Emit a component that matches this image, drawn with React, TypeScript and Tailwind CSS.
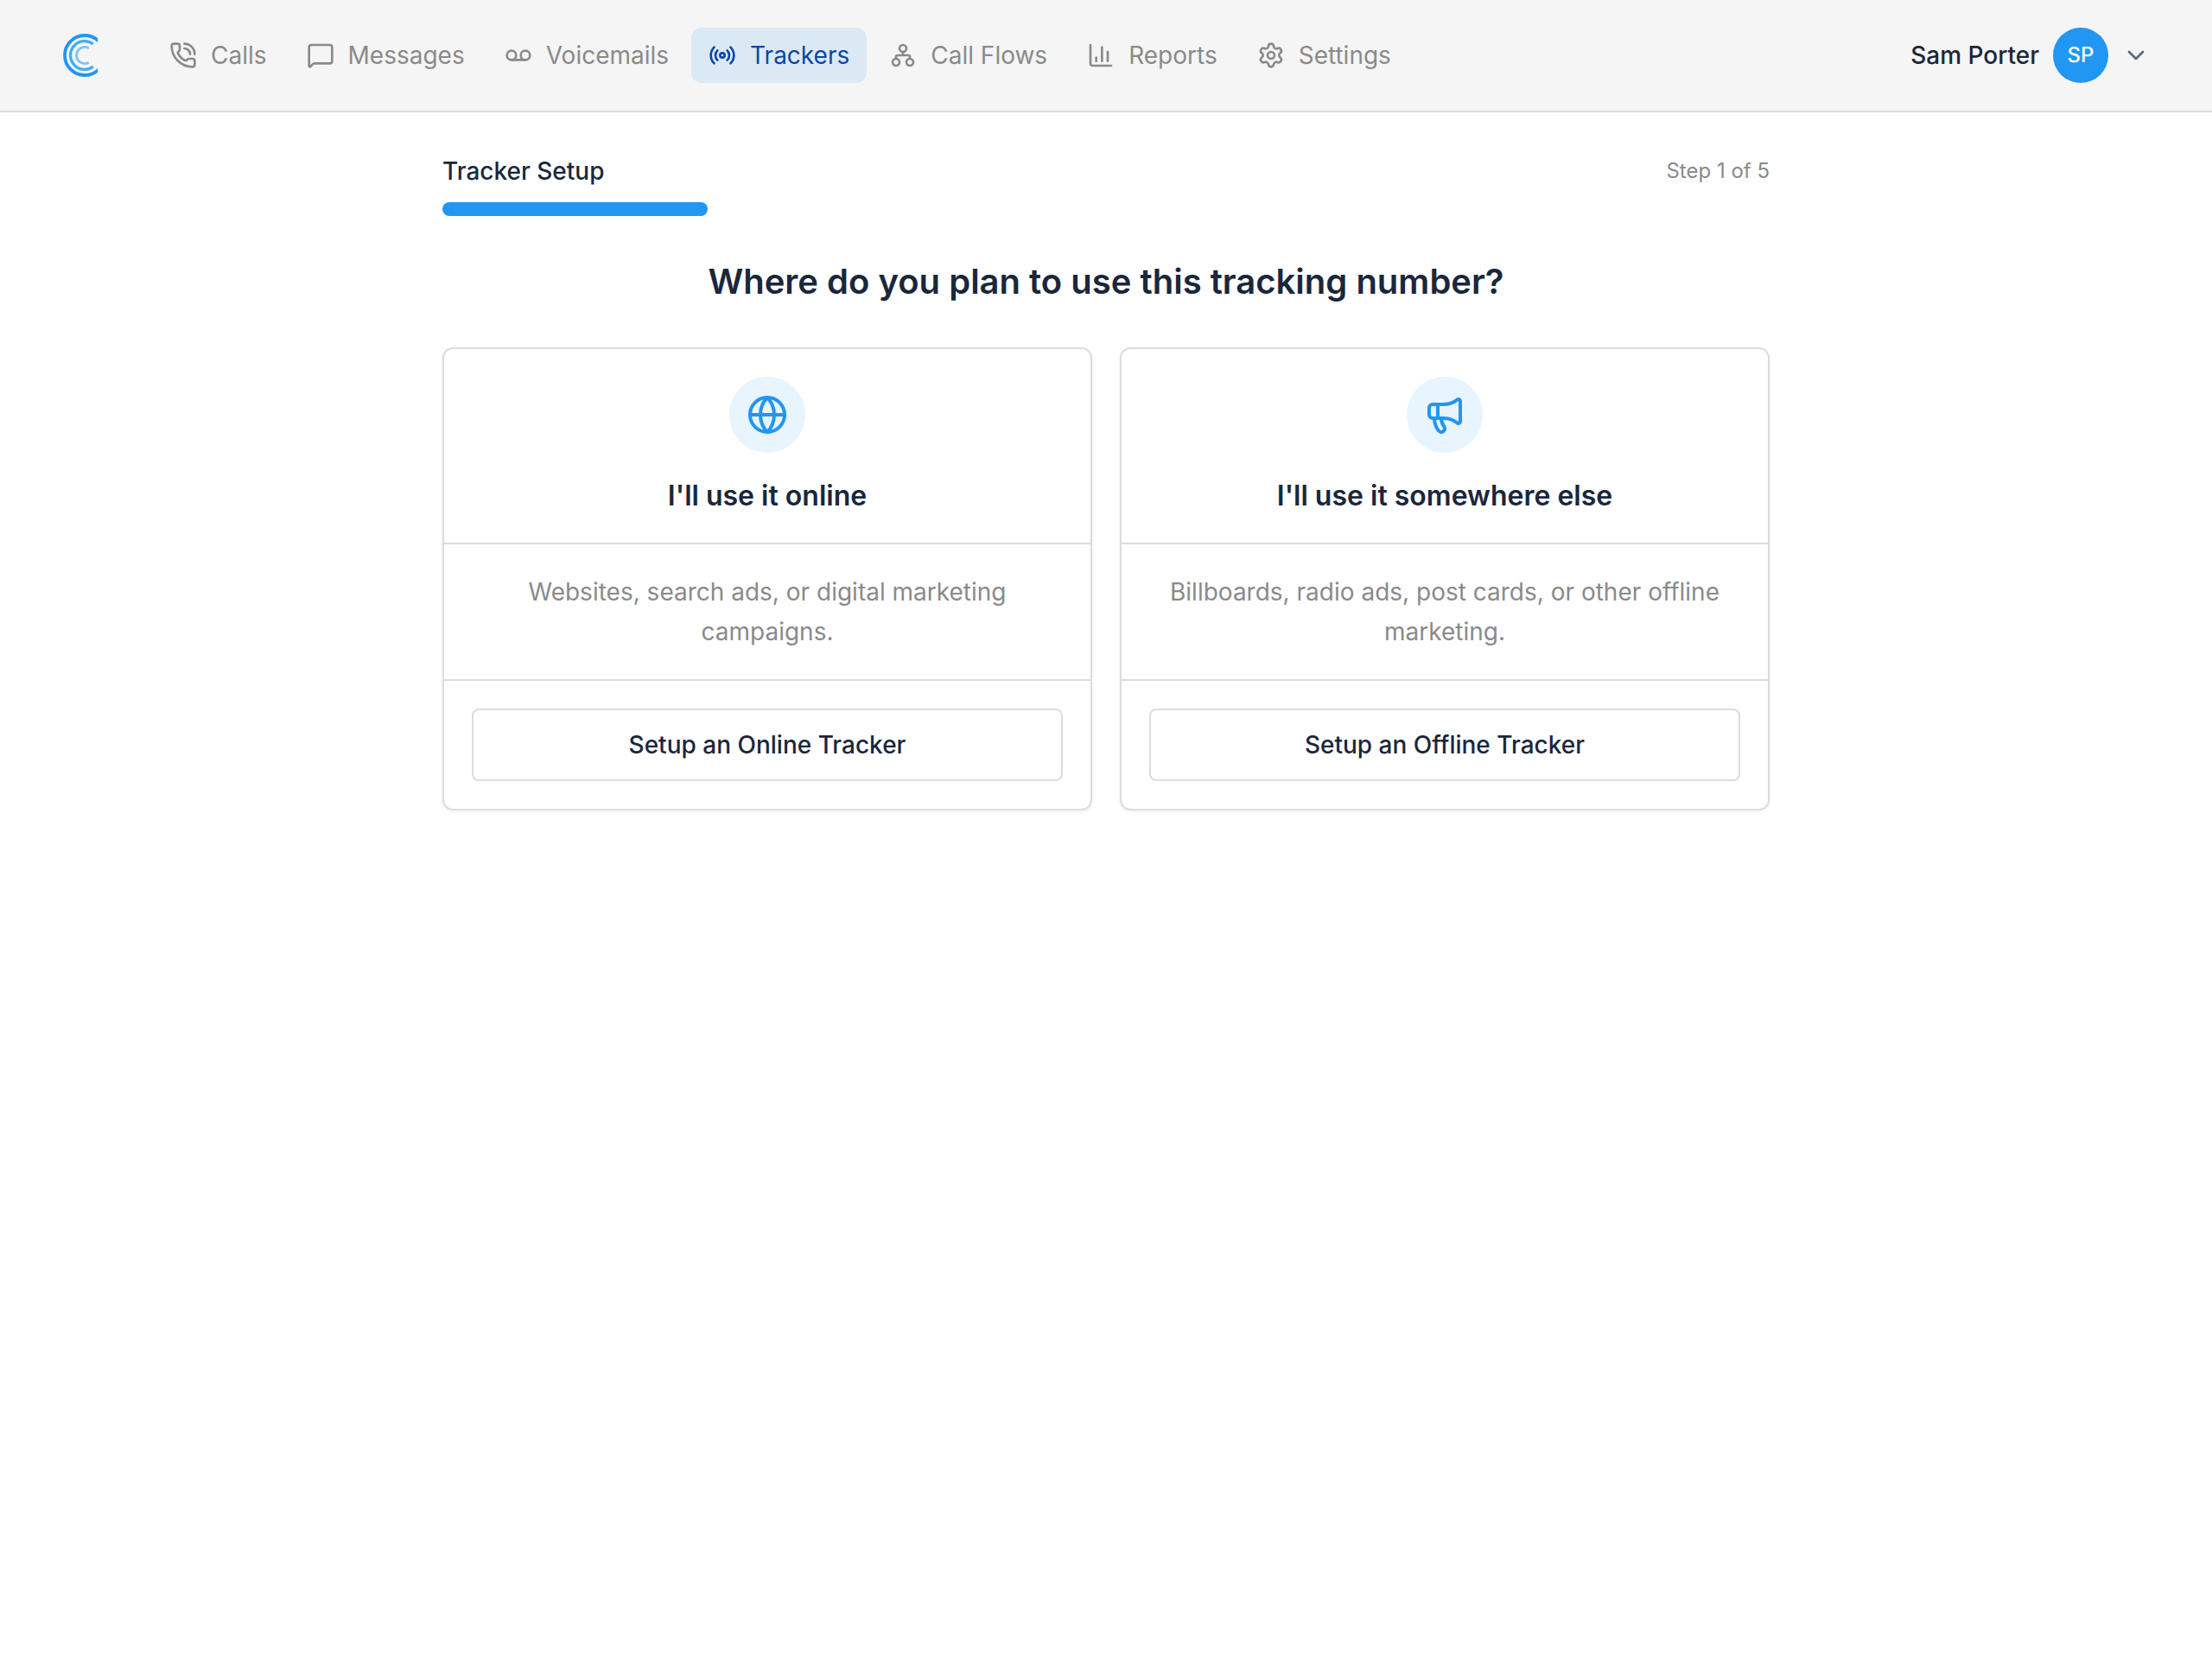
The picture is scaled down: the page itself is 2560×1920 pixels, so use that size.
import React from "react";
import { ChartColumn, ChevronDown, Globe, Megaphone, MessageSquare, PhoneCall, Radio, Settings, Voicemail } from "lucide-react";

type IconType = React.ComponentType<{ className?: string }>;

function FlowIcon({ className }: { className?: string }) {
  return (
    <svg className={className} viewBox="0 0 24 24" fill="none" stroke="currentColor" strokeWidth="2" strokeLinecap="round" strokeLinejoin="round" aria-hidden="true">
      <circle cx="12" cy="6" r="3" />
      <circle cx="6" cy="18" r="3" />
      <circle cx="18" cy="18" r="3" />
      <path d="M12 9v3M6 15v-2a1 1 0 0 1 1-1h10a1 1 0 0 1 1 1v2" />
    </svg>
  );
}

function Logo() {
  return (
    <svg className="h-[50px] w-[41px]" viewBox="0 0 41 50" fill="none" aria-hidden="true">
      <path d="M42 8.5A23 23 0 1 0 42 41.5" stroke="#2196f3" strokeWidth="3.8" />
      <path d="M35.8 11.9A16.4 16.4 0 1 0 35.8 38.1" stroke="#42aef2" strokeWidth="3.3" />
      <path d="M30.8 16.7A9.6 9.6 0 1 0 30.8 33.3" stroke="#7cc4f2" strokeWidth="2.8" />
    </svg>
  );
}

const navItems: { label: string; icon: IconType; active?: boolean }[] = [
  { label: "Calls", icon: PhoneCall },
  { label: "Messages", icon: MessageSquare },
  { label: "Voicemails", icon: Voicemail },
  { label: "Trackers", icon: Radio, active: true },
  { label: "Call Flows", icon: FlowIcon },
  { label: "Reports", icon: ChartColumn },
  { label: "Settings", icon: Settings },
];

const options: { title: string; text: string; action: string; icon: IconType }[] = [
  { title: "I'll use it online", text: "Websites, search ads, or digital marketing campaigns.", action: "Setup an Online Tracker", icon: Globe },
  { title: "I'll use it somewhere else", text: "Billboards, radio ads, post cards, or other offline marketing.", action: "Setup an Offline Tracker", icon: Megaphone },
];

export default function App() {
  return (
    <div className="min-h-screen bg-white font-['Inter',sans-serif] text-[28px] leading-10 text-[#1a273b]">
      <header className="flex items-center justify-between border-b-2 border-[#dcdcdc] bg-[#f5f5f5] px-[72px] py-8">
        <div className="flex items-center gap-[63px]">
          <a href="#" aria-label="Home">
            <Logo />
          </a>
          <nav className="flex gap-1.5">
            {navItems.map(({ label, icon: Icon, active }) => (
              <a
                key={label}
                href="#"
                aria-current={active ? "page" : undefined}
                className={
                  active
                    ? "flex h-16 items-center gap-4 rounded-xl bg-[#dbe9f5] px-5 text-[#0d47a1]"
                    : "flex h-16 items-center gap-4 rounded-xl px-5 text-[#8a8a8a]"
                }
              >
                <Icon className="size-8" />
                {label}
              </a>
            ))}
          </nav>
        </div>
        <button type="button" className="flex items-center gap-4 font-medium">
          Sam Porter
          <span className="flex size-16 items-center justify-center rounded-full bg-[#2196f3] text-2xl text-white">SP</span>
          <ChevronDown className="size-8 text-[#5f6875]" />
        </button>
      </header>

      <main className="mx-auto max-w-[1536px] pt-12">
        <div className="flex items-center justify-between">
          <span className="font-medium">Tracker Setup</span>
          <span className="text-2xl text-[#8a8a8a]">Step 1 of 5</span>
        </div>
        <div role="progressbar" aria-label="Tracker Setup" aria-valuemin={0} aria-valuemax={5} aria-valuenow={1} className="mt-4">
          <div className="h-4 w-1/5 rounded-full bg-[#2196f3]" />
        </div>

        <h1 className="mt-12 text-center text-[40px] leading-14 font-semibold">Where do you plan to use this tracking number?</h1>

        <div className="mt-12 grid grid-cols-2 gap-8">
          {options.map(({ title, text, action, icon: Icon }) => (
            <section key={title} className="divide-y-2 divide-[#dcdcdc] rounded-xl border-2 border-[#dcdcdc] text-center shadow-[0_2px_4px_rgba(0,0,0,0.05)]">
              <div className="flex flex-col items-center gap-7 p-8">
                <div className="flex size-[88px] items-center justify-center rounded-full bg-[#e8f4fe] text-[#2196f3]">
                  <Icon className="size-12" />
                </div>
                <h2 className="text-[32px] leading-11 font-semibold">{title}</h2>
              </div>
              <p className="p-8 leading-[46px] text-[#8a8a8a]">{text}</p>
              <div className="p-8">
                <button type="button" className="w-full rounded-lg border-2 border-[#dcdcdc] px-8 py-5 font-medium">
                  {action}
                </button>
              </div>
            </section>
          ))}
        </div>
      </main>
    </div>
  );
}
